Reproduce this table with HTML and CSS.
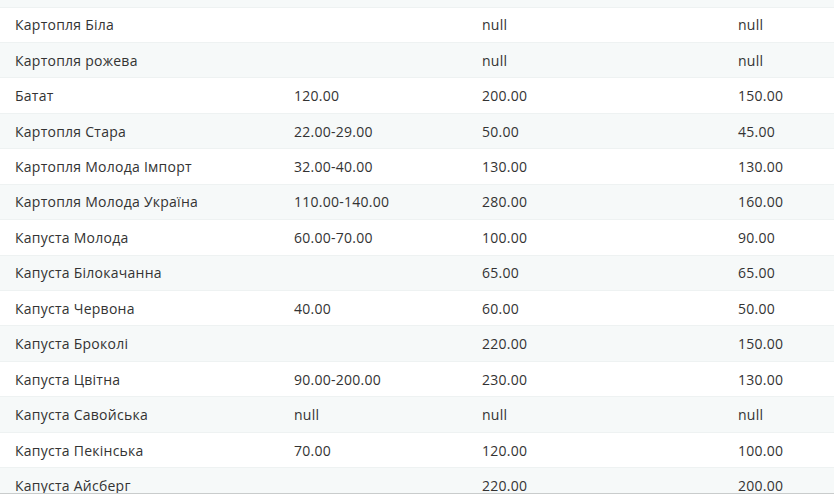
FILE: index.html
```html
<!DOCTYPE html>
<html lang="uk">
<head>
<meta charset="utf-8">
<link rel="stylesheet" href="styles.css">
</head>
<body>
<div class="wrap">
<table class="prices">
<colgroup><col class="c1"><col class="c2"><col class="c3"><col class="c4"></colgroup>
<tbody>
<tr><td></td><td></td><td></td><td></td></tr>
<tr><td>Картопля Біла</td><td></td><td>null</td><td>null</td></tr>
<tr><td>Картопля рожева</td><td></td><td>null</td><td>null</td></tr>
<tr><td>Батат</td><td>120.00</td><td>200.00</td><td>150.00</td></tr>
<tr><td>Картопля Стара</td><td>22.00-29.00</td><td>50.00</td><td>45.00</td></tr>
<tr><td>Картопля Молода Імпорт</td><td>32.00-40.00</td><td>130.00</td><td>130.00</td></tr>
<tr><td>Картопля Молода Україна</td><td>110.00-140.00</td><td>280.00</td><td>160.00</td></tr>
<tr><td>Капуста Молода</td><td>60.00-70.00</td><td>100.00</td><td>90.00</td></tr>
<tr><td>Капуста Білокачанна</td><td></td><td>65.00</td><td>65.00</td></tr>
<tr><td>Капуста Червона</td><td>40.00</td><td>60.00</td><td>50.00</td></tr>
<tr><td>Капуста Броколі</td><td></td><td>220.00</td><td>150.00</td></tr>
<tr><td>Капуста Цвітна</td><td>90.00-200.00</td><td>230.00</td><td>130.00</td></tr>
<tr><td>Капуста Савойська</td><td>null</td><td>null</td><td>null</td></tr>
<tr><td>Капуста Пекінська</td><td>70.00</td><td>120.00</td><td>100.00</td></tr>
<tr><td>Капуста Айсберг</td><td></td><td>220.00</td><td>200.00</td></tr>
</tbody>
</table>
</div>
</body>
</html>
```
FILE: styles.css
```css
html, body {
  margin: 0;
  padding: 0;
  background: #ffffff;
}
.wrap {
  height: 493px;
  overflow: hidden;
  border-bottom: 1px solid #c9cccc;
  box-sizing: content-box;
}
.prices {
  width: 834px;
  border-collapse: collapse;
  table-layout: fixed;
  margin-top: -28.4px;
  font-family: "Open Sans", "Noto Sans", sans-serif;
  font-size: 14px;
  letter-spacing: 0.25px;
  color: #333333;
}
.c1 { width: 279px; }
.c2 { width: 188px; }
.c3 { width: 256px; }
.c4 { width: 111px; }
.prices td {
  height: 35.45px;
  padding: 1px 0 0 15px;
  border-bottom: 1px solid #eef2f2;
  white-space: nowrap;
  vertical-align: middle;
  line-height: 20px;
  box-sizing: border-box;
}
.prices tr:nth-child(odd) td {
  background: #f6f9f9;
}
```
